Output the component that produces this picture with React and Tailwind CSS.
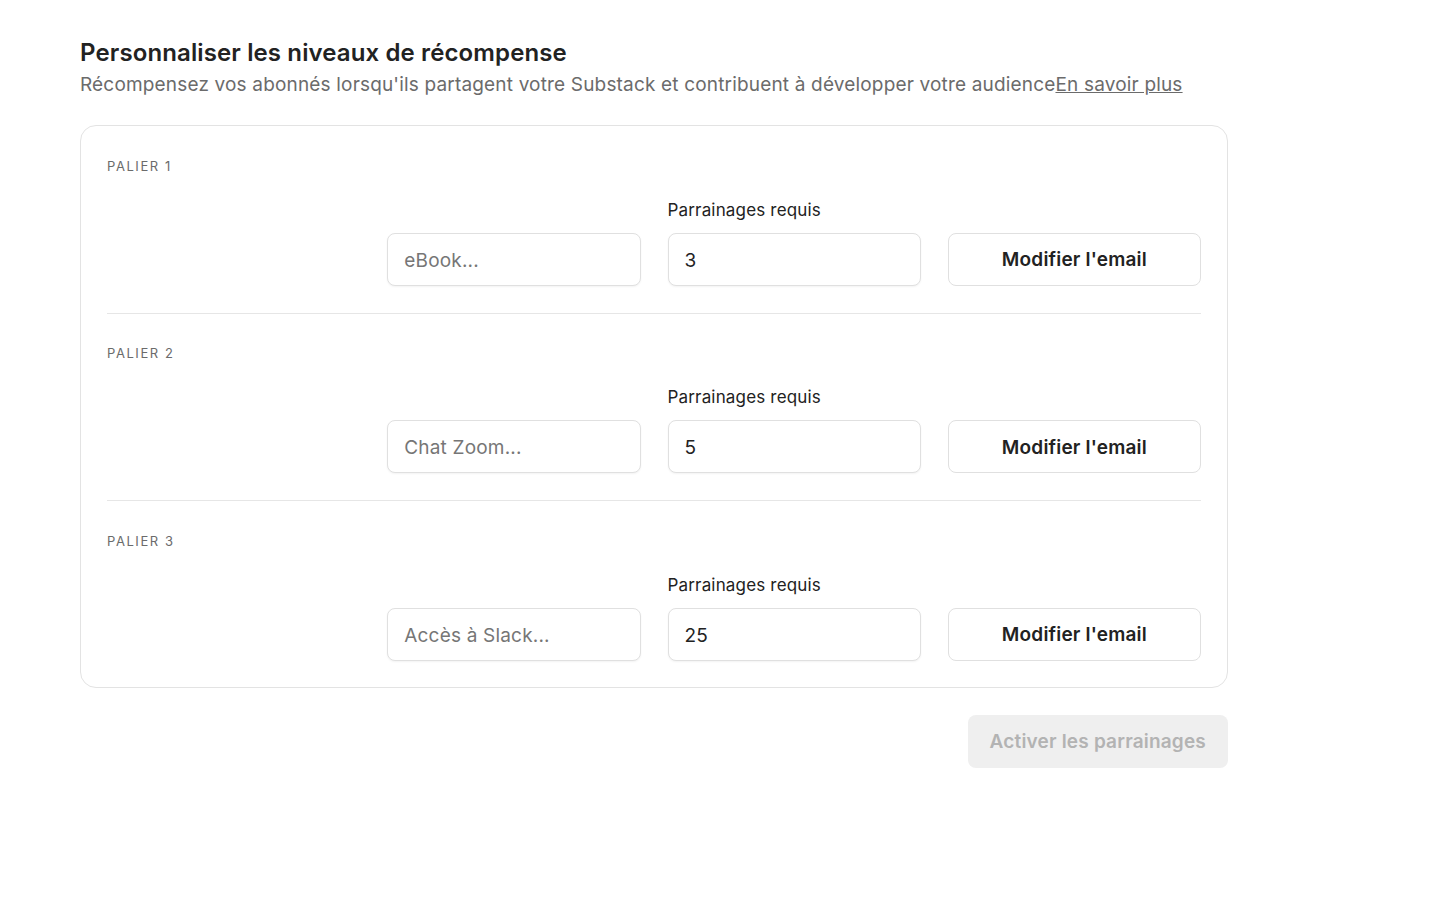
const tiers = [
  { label: "PALIER 1", placeholder: "eBook...", count: "3" },
  { label: "PALIER 2", placeholder: "Chat Zoom...", count: "5" },
  { label: "PALIER 3", placeholder: "Accès à Slack...", count: "25" },
];

function Tier({ tier, last }) {
  return (
    <div className={`pt-[31.5px] ${last ? "pb-[26px]" : "pb-[27px] border-b border-[#e6e6e6]"}`}>
      <div className="text-[13px] leading-[16px] tracking-[0.12em] text-[#6b6b6b]">{tier.label}</div>
      <div className="grid grid-cols-4 gap-x-[27px] mt-[26px]">
        <div />
        <div />
        <div className="text-[17px] leading-[20px] tracking-[0.01em] text-[#222]">Parrainages requis</div>
        <div />
      </div>
      <div className="grid grid-cols-4 gap-x-[27px] mt-[13px]">
        <div />
        <input
          placeholder={tier.placeholder}
          className="h-[53px] rounded-[8px] border border-[#e0e0e0] bg-white px-[16px] pt-[2px] text-[19px] tracking-[0.01em] text-[#222] placeholder:text-[#767676] shadow-[0_1px_2px_rgba(0,0,0,0.05)] outline-none"
        />
        <input
          defaultValue={tier.count}
          className="h-[53px] rounded-[8px] border border-[#e0e0e0] bg-white px-[16px] pt-[2px] text-[19px] tracking-[0.01em] text-[#222] shadow-[0_1px_2px_rgba(0,0,0,0.05)] outline-none"
        />
        <button className="h-[53px] rounded-[8px] border border-[#e0e0e0] bg-white pt-[3px] text-[19px] tracking-[0.01em] font-semibold text-[#222]">
          Modifier l'email
        </button>
      </div>
    </div>
  );
}

export default function App() {
  return (
    <div className="min-h-screen bg-white font-['Inter',sans-serif] pl-[80px] pt-[37px]">
      <div className="w-[1148px]">
        <h1 className="text-[24px] leading-[32px] font-semibold text-[#222] tracking-[0.005em]">
          Personnaliser les niveaux de récompense
        </h1>
        <p className="text-[19px] leading-[28px] tracking-[0.009em] text-[#6b6b6b] mt-[2px] whitespace-nowrap">
          Récompensez vos abonnés lorsqu'ils partagent votre Substack et contribuent à développer votre audience
          <a href="#" className="underline">En savoir plus</a>
        </p>
        <div className="mt-[26px] rounded-[16px] border border-[#e3e3e3] px-[26px]">
          {tiers.map((t, i) => (
            <Tier key={t.label} tier={t} last={i === tiers.length - 1} />
          ))}
        </div>
        <div className="flex justify-end mt-[27px]">
          <button className="h-[53px] px-[22px] pt-[2px] rounded-[8px] bg-[#efefef] text-[19px] tracking-[0.01em] font-semibold text-[#b3b3b3]">
            Activer les parrainages
          </button>
        </div>
      </div>
    </div>
  );
}
